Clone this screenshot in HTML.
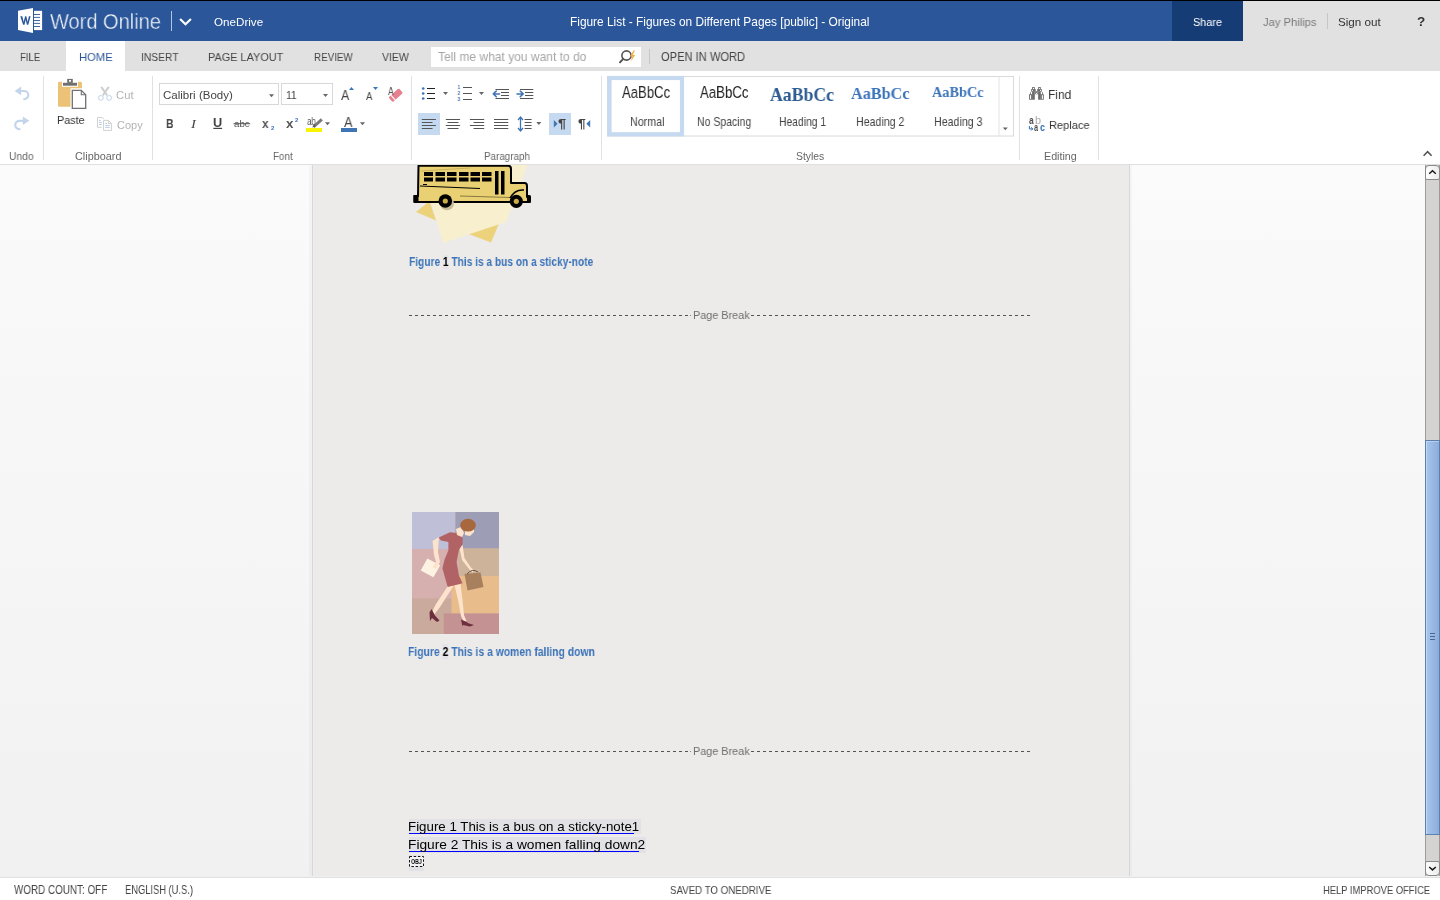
<!DOCTYPE html>
<html><head><meta charset="utf-8">
<style>
*{margin:0;padding:0;box-sizing:border-box}
html,body{width:1440px;height:900px;overflow:hidden;background:#fff;font-family:"Liberation Sans",sans-serif}
.a{position:absolute}
.t{position:absolute;white-space:nowrap;will-change:transform}
.sep{position:absolute;top:76px;width:1px;height:84px;background:#e1e1e1}
svg{position:absolute;overflow:visible}
</style></head><body>
<!-- header -->
<div class="a" style="left:0;top:0;width:1440px;height:1px;background:#000"></div>
<div class="a" style="left:0;top:1px;width:1440px;height:40px;background:#2b579a"></div>
<div class="a" style="left:1172px;top:1px;width:71px;height:40px;background:#163c75"></div>
<div class="a" style="left:1243px;top:1px;width:197px;height:40px;background:#e1e1e1"></div>
<svg style="left:0;top:0" width="60" height="41" viewBox="0 0 60 41">
<path d="M18 10.8 L33 7.9 L33 33 L18 30.1 Z" fill="#fff"/>
<path d="M34 10.8 H42.1 V30.1 H34 Z" fill="#fff"/>
<path d="M34 14.5H40M34 17.4H40M34 20.5H40M34 23.4H40M34 26.5H40" stroke="#2b579a" stroke-width="0.9"/>
<path d="M20.3 16.2 L22.3 16.2 L23.7 22 L25.1 16.2 L26.3 16.2 L27.7 22 L28.9 16.2 L30.6 16.2 L28.3 24.8 L26.9 24.8 L25.7 19.8 L24.5 24.8 L23.1 24.8 Z" fill="#2b579a"/>
</svg>
<div class="a" style="left:171px;top:11px;width:1px;height:20px;background:#b4c5e0"></div>
<svg style="left:0;top:0" width="200" height="41"><path d="M180.1 18.9 L185.5 24.2 L190.9 18.9" stroke="#fff" stroke-width="2.1" fill="none"/></svg>
<div class="a" style="left:1327px;top:13px;width:1px;height:16px;background:#c6c6c6"></div>
<!-- tabs -->
<div class="a" style="left:0;top:41px;width:1440px;height:30px;background:#e1e1e1"></div>
<div class="a" style="left:66px;top:41px;width:59px;height:30px;background:#fff"></div>
<div class="a" style="left:431px;top:47px;width:210px;height:20px;background:#fff"></div>
<svg style="left:618px;top:49px" width="20" height="16" viewBox="0 0 20 16">
<circle cx="8.5" cy="6.5" r="4.6" stroke="#555" stroke-width="1.6" fill="none"/>
<path d="M5.2 9.8 L2 13.3" stroke="#555" stroke-width="2" stroke-linecap="round"/>
<path d="M15.5 1.5 L12 7.5 L14.5 7.5 L12.5 13 L17.2 6 L14.7 6 L17 1.5 Z" fill="#f0b040"/>
</svg>
<div class="a" style="left:649px;top:49px;width:1px;height:15px;background:#c6c6c6"></div>
<!-- ribbon -->
<div class="a" style="left:0;top:164px;width:1440px;height:1px;background:#e0e0e0"></div>
<div class="sep" style="left:43px"></div>
<div class="sep" style="left:152px"></div>
<div class="sep" style="left:411px"></div>
<div class="sep" style="left:601px"></div>
<div class="sep" style="left:1019px"></div>
<div class="sep" style="left:1098px"></div>
<svg style="left:0;top:0" width="1440" height="165" viewBox="0 0 1440 165">
<!-- undo / redo -->
<g fill="#c3d5ea"><path d="M14.6 90.9 L21.2 86.6 L21.2 95.2 Z"/><path d="M29.4 120.8 L22.8 116.5 L22.8 125.1 Z"/></g>
<g stroke="#c3d5ea" stroke-width="2.1" fill="none">
<path d="M19.5 91 H24 C26.5 91 28.3 92.8 28.3 95 C28.3 97.3 26.3 99 23.3 99.3"/>
<path d="M24.5 120.9 H19.5 C17 120.9 15.2 122.7 15.2 124.9 C15.2 127.2 17.2 129 20.4 129.3"/>
</g>
<!-- clipboard -->
<rect x="58" y="81.7" width="24" height="25" rx="1.5" fill="#ebc276"/>
<rect x="62" y="77.5" width="16" height="9.3" fill="#fff"/>
<rect x="63" y="82.8" width="14" height="2.9" fill="#6f6f6f"/>
<rect x="67.2" y="78.9" width="5.6" height="4" fill="#6f6f6f"/>
<rect x="69" y="80" width="2" height="1.7" fill="#fff"/>
<rect x="70.5" y="88.3" width="17" height="22" fill="#fff"/>
<path d="M72.3 90.3 H81.3 L85.7 94.7 V108.4 H72.3 Z" fill="#fff" stroke="#707070" stroke-width="1.3"/>
<path d="M81.3 90.3 V94.7 H85.7" fill="none" stroke="#707070" stroke-width="1.1"/>
<!-- scissors -->
<g fill="#cdcdcd"><path d="M100.3 87.2 L102.2 86.6 L107.9 94.8 L106.4 96 Z"/><path d="M109.7 87.2 L107.8 86.6 L102.1 94.8 L103.6 96 Z"/></g>
<g stroke="#bfd2ea" stroke-width="1" fill="none"><circle cx="100.9" cy="97.9" r="2.4"/><circle cx="109.1" cy="97.9" r="2.4"/></g>
<!-- copy -->
<path d="M101.8 127.3 H97.55 V117.55 H102.4 L104.2 119.3" fill="none" stroke="#d0d0d0" stroke-width="1"/>
<path d="M103.55 120.4 H108.4 L111.55 123.55 V130.4 H103.55 Z" fill="#fff" stroke="#d0d0d0" stroke-width="1"/>
<path d="M108.4 120.4 V123.55 H111.55" fill="none" stroke="#d0d0d0" stroke-width="1"/>
<g stroke="#b8cce4" stroke-width="1"><path d="M99 120.4H100.8M99 122.4H101.8M99 124.4H101.8M105.3 123.4H107M105.3 125.4H109.8M105.3 127.4H109.8"/></g>
<!-- font boxes -->
<rect x="159.5" y="83.5" width="119" height="21" fill="#fff" stroke="#d8d8d8" stroke-width="1"/>
<rect x="281.5" y="83.5" width="51" height="21" fill="#fff" stroke="#d8d8d8" stroke-width="1"/>
<g fill="#666"><path d="M269 94.2 L274 94.2 L271.5 97.2 Z"/><path d="M323 94 L328 94 L325.5 97 Z"/>
<path d="M325 122.2 L330 122.2 L327.5 125.2 Z"/><path d="M360 122.2 L365 122.2 L362.5 125.2 Z"/>
<path d="M443 92 L448 92 L445.5 95 Z"/><path d="M479 92 L484 92 L481.5 95 Z"/><path d="M536.3 122 L541.4 122 L538.8 125 Z"/></g>
<g fill="#3a76bd"><path d="M349 90 L354 90 L351.5 87 Z"/><path d="M373 87 L378 87 L375.5 90 Z"/></g>
<!-- eraser -->
<g transform="rotate(-42 395.7 95.2)"><rect x="388.8" y="92" width="13.8" height="6.4" rx="1.2" fill="#e7808e"/><rect x="391.6" y="91.5" width="1.1" height="7.4" fill="#fff"/></g>
<!-- U underline, strike -->
<rect x="213.3" y="127.8" width="8.8" height="1.2" fill="#444"/>
<rect x="233.5" y="123.2" width="16.7" height="1" fill="#555"/>
<!-- highlighter / font color bars -->
<rect x="306" y="128" width="16" height="4" fill="#f9f500"/>
<rect x="341" y="128" width="16" height="4" fill="#3f74b5"/>
<path d="M321.8 119.4 L313.5 127" stroke="#7a7a7a" stroke-width="3" stroke-linecap="butt"/>
<path d="M312 127.6 L314.5 124.8 L315.5 126.5 Z" fill="#555"/>
<!-- paragraph row 1 -->
<g fill="#3f74b5"><circle cx="423.2" cy="88.5" r="1.35"/><circle cx="423.2" cy="93.5" r="1.35"/><circle cx="423.2" cy="98.5" r="1.35"/></g>
<path d="M427 88.5H435M427 93.5H435M427 98.5H435" stroke="#222" stroke-width="1.2"/>
<path d="M463 87.5H472M463 93.5H472M463 99.5H472" stroke="#555" stroke-width="1"/>
<g fill="#3f74b5" font-family="Liberation Sans" font-size="4.6" font-weight="bold"><text x="457.6" y="89.3">1</text><text x="457.6" y="95.1">2</text><text x="457.6" y="100.9">3</text></g>
<path d="M495.5 89.5H509M501 92.5H509M501 95.5H509M495.5 98.5H509" stroke="#555" stroke-width="1"/>
<path d="M520 89.5H533.3M525 92.5H533.3M525 95.5H533.3M520 98.5H533.3" stroke="#555" stroke-width="1"/>
<g stroke="#3f74b5" stroke-width="1.5" fill="none" stroke-linecap="round" stroke-linejoin="round"><path d="M499.5 93.9H493.5M496.3 91 L493.3 93.9 L496.3 96.8"/><path d="M517 93.9H523M520.2 91 L523.2 93.9 L520.2 96.8"/></g>
<!-- paragraph row 2 -->
<rect x="418" y="113" width="22" height="22" fill="#c5d9f1"/>
<rect x="549" y="113" width="22" height="22" fill="#c5d9f1"/>
<g stroke="#555" stroke-width="1">
<path d="M421.8 119.5H435.9M421.8 122.5H432.5M421.8 125.5H435.9M421.8 128.5H432.5"/>
<path d="M445.8 119.5H460.1M447.5 122.5H458.5M445.8 125.5H460.1M447.5 128.5H458.5"/>
<path d="M469.9 119.5H484.2M473.5 122.5H484.2M469.9 125.5H484.2M473.5 128.5H484.2"/>
<path d="M494 119.5H508.3M494 122.5H508.3M494 125.5H508.3M494 128.5H508.3"/>
<path d="M524.6 119.5H531.6M524.6 122.5H531.6M524.6 125.5H531.6M524.6 128.5H531.6"/>
</g>
<g stroke="#3f74b5" stroke-width="1.3" fill="none"><path d="M520.5 117.5V130.5M518 120 L520.5 117 L523 120M518 128 L520.5 131 L523 128"/></g>
<path d="M553.8 120 L557.6 123.8 L553.8 127.6 Z" fill="#3f74b5"/>
<path d="M590.2 120 L586.4 123.8 L590.2 127.6 Z" fill="#3f74b5"/>
<!-- styles gallery -->
<rect x="607.5" y="76.5" width="406" height="59.5" fill="#fff" stroke="#dadada" stroke-width="1"/>
<rect x="998.5" y="76.5" width="1" height="59.5" fill="#e3e3e3"/>
<rect x="609.5" y="78" width="72.5" height="56.3" fill="none" stroke="#c5d9f1" stroke-width="4.2"/>
<path d="M1002.8 127.5 L1007.8 127.5 L1005.3 130.3 Z" fill="#666"/>
<!-- find / replace -->
<g fill="#6a6a6a">
<rect x="1032.1" y="87.1" width="2.7" height="2.2"/><rect x="1031.1" y="89.1" width="4.6" height="2.6"/><rect x="1032.1" y="91.5" width="2.7" height="8.2"/>
<rect x="1029.1" y="94.2" width="3.2" height="5.5"/><rect x="1030" y="92.3" width="0.9" height="2"/>
<rect x="1035.2" y="91.3" width="2.5" height="3"/>
<rect x="1038.1" y="87.1" width="2.7" height="2.2"/><rect x="1037.2" y="89.1" width="4.6" height="2.6"/><rect x="1038.1" y="91.5" width="2.7" height="8.2"/>
<rect x="1040.6" y="94.2" width="3.2" height="5.5"/><rect x="1042" y="92.3" width="0.9" height="2"/>
</g>
<g fill="#fff">
<rect x="1033" y="88" width="1" height="1"/><rect x="1031.9" y="89.9" width="1" height="1"/><rect x="1036" y="92.9" width="1" height="1"/>
<rect x="1038.9" y="88" width="1" height="1"/><rect x="1040" y="89.9" width="1" height="1"/>
<rect x="1030" y="95.2" width="1.1" height="3.7"/><rect x="1041.8" y="95.2" width="1.1" height="3.7"/>
</g>
<path d="M1029.4 125.9 V128.9 H1032.6 M1031.2 127.3 L1032.8 128.9 L1031.2 130.5" stroke="#2e6db4" stroke-width="1" fill="none"/>
<!-- collapse chevron -->
<path d="M1423.6 155.8 L1427.6 151.6 L1431.6 155.8" stroke="#555" stroke-width="1.6" fill="none"/>
</svg>
<!-- document area -->
<div class="a" style="left:0;top:165px;width:1425px;height:711px;background:linear-gradient(#fbfbfb 0px,#fafafa 40px,#f1f1f1 711px)"></div>
<div class="a" style="left:309px;top:165px;width:3px;height:711px;background:rgba(0,0,0,0.022)"></div>
<div class="a" style="left:1130px;top:165px;width:2px;height:711px;background:rgba(0,0,0,0.022)"></div>
<div class="a" style="left:312px;top:165px;width:818px;height:711px;background:#edebe9;border-left:1px solid #d6d7dc;border-right:1px solid #d6d7dc"></div>
<div class="a" style="left:313px;top:165px;width:1px;height:711px;background:#efeeec"></div>
<div class="a" style="left:0;top:876px;width:1440px;height:1px;background:#f0f0f0"></div>
<div class="a" style="left:0;top:877px;width:1440px;height:1px;background:#e0e0e0"></div>
<!-- bus on sticky note -->
<svg style="left:0;top:0" width="1440" height="900" viewBox="0 0 1440 900">
<defs><clipPath id="dc"><rect x="0" y="165" width="1424" height="711"/></clipPath></defs>
<g clip-path="url(#dc)">
<path d="M416 212 L429.5 201 L436 220.5 Z" fill="#ecd27a"/>
<path d="M466 233 L499 223.5 L491 242.5 Z" fill="#ecd27a"/>
<path d="M431 201 L470 160 L528 163 L506 222 L443 243 Z" fill="#f8efcf"/>
<!-- bus body -->
<path d="M418.5 165.8 H508 Q511 165.8 511 169 V183 H524.5 Q527 183 527 186 V197 L529.5 198 V202 H414.5 V196 H418 Z" fill="#e9d173" stroke="#000" stroke-width="2" stroke-linejoin="round"/>
<path d="M420 186 L480 188.5" stroke="#000" stroke-width="1" fill="none"/>
<path d="M460 196 L510 197.5" stroke="#8a7a40" stroke-width="1.2" fill="none"/>
<path d="M421 171 L470 168" stroke="#c8b060" stroke-width="1" fill="none"/>
<g fill="#000">
<rect x="424" y="172" width="9" height="4"/><rect x="435.5" y="172" width="9.5" height="4"/><rect x="447" y="172" width="9.5" height="4"/><rect x="459" y="172" width="9.5" height="4"/><rect x="470.5" y="172" width="9.5" height="4"/><rect x="482" y="172" width="9.5" height="4"/>
<rect x="424" y="177.5" width="9" height="4"/><rect x="435.5" y="177.5" width="9.5" height="4"/><rect x="447" y="177.5" width="9.5" height="4"/><rect x="459" y="177.5" width="9.5" height="4"/><rect x="470.5" y="177.5" width="9.5" height="4"/><rect x="482" y="177.5" width="9.5" height="4"/>
<rect x="495" y="171" width="3.5" height="23.5"/><rect x="501" y="171" width="3.5" height="23.5"/>
<rect x="423" y="184" width="4" height="1"/>
</g>
<path d="M510 198 Q515 189 524 190" stroke="#000" stroke-width="1.5" fill="none"/>
<ellipse cx="447" cy="203.5" rx="7" ry="6.8" fill="#c8bc98"/>
<circle cx="445.3" cy="201" r="6.8" fill="#000"/><circle cx="445.3" cy="201" r="2.6" fill="#c9ac4c"/>
<circle cx="516.3" cy="201.3" r="6.6" fill="#000"/><circle cx="516.3" cy="201.3" r="2.6" fill="#c9ac4c"/>
<rect x="527" y="195" width="4" height="8" rx="1.5" fill="#000"/>
<rect x="413.5" y="195" width="5" height="7.5" fill="#000"/>
</g>
<!-- woman image -->
<g transform="translate(412 512)">
<rect x="0" y="0" width="87" height="122" fill="#c9aa9c"/>
<rect x="0" y="0" width="43.5" height="37" fill="#bfc0d7"/>
<rect x="43.5" y="0" width="43.5" height="36.5" fill="#9d9eb6"/>
<rect x="0" y="37" width="47" height="49.5" fill="#d6afaf"/>
<rect x="47" y="36.5" width="40" height="27.5" fill="#cdb39a"/>
<rect x="39.5" y="64" width="47.5" height="37.5" fill="#e9bd8b"/>
<rect x="31.8" y="101.5" width="55.2" height="20.5" fill="#c49293"/>
<!-- legs -->
<path d="M36.5 73 L24 92 L19.8 100.5 L22.3 102.5 L28 95 L41.5 74 Z" fill="#fde2cc"/>
<path d="M42.5 73 L46.5 90 L49 104 L51.5 109.5 L54.5 109 L52 103 L50.5 88 L48.5 72 Z" fill="#fde2cc"/>
<!-- shoes -->
<path d="M17.5 100.5 L19.5 97 L23 103.5 L27.5 108.5 L25 110 L20 106 L18 109 Z" fill="#6d2e3e"/>
<path d="M49 107.5 L52.5 109 L57 111.5 L62 113 L58 114.5 L51 113 L50.5 114.5 Z" fill="#6d2e3e"/>
<!-- paper -->
<path d="M15.4 46.5 L28.2 53.2 L21.4 65.2 L8.7 58.5 Z" fill="#fef3e3"/>
<!-- arms -->
<path d="M27 25 L20.5 29 L22 43 L24 50 L20.5 55 L24 57 L28 50 L26 40 L26.5 31 Z" fill="#fde2cc"/>
<path d="M47.5 36 L50 48 L57.5 57.5 L60.5 60.5 L62 58.5 L58.5 55 L52.5 46 L50.6 33 Z" fill="#fde2cc"/>
<!-- dress -->
<path d="M26.7 25.5 L37.9 20.2 L44.6 21 L50.6 25.5 L50.6 31.9 L46.9 38 L44.6 50 L47 63.7 L50.6 71.2 L35.7 74.9 L30.4 56.2 L32.7 47.2 L36.4 38.2 L36.4 29.9 L28.9 28.5 Z" fill="#b06265"/>
<!-- neck / face / hair -->
<path d="M44 17 L49 15 L52 21 L50 25 L45 23 Z" fill="#fde2cc"/>
<path d="M53 14 L62 14 L62 20 L58 24 L53 23 Z" fill="#fde2cc"/>
<ellipse cx="56" cy="13.2" rx="7.8" ry="6.4" fill="#a8683e"/>
<!-- bag -->
<path d="M52.5 62 L68.5 60.5 L71.5 75 L55.5 78.5 Z" fill="#a8805d"/>
<path d="M55 62 Q60 56 66 60" stroke="#6a5040" stroke-width="1" fill="none"/>
</g>
</svg>
<!-- page break dashes -->
<div class="a" style="left:409px;top:315px;width:282px;height:1px;background:repeating-linear-gradient(90deg,#555 0 3px,transparent 3px 6px)"></div>
<div class="a" style="left:751px;top:315px;width:279px;height:1px;background:repeating-linear-gradient(90deg,#555 0 3px,transparent 3px 6px)"></div>
<div class="a" style="left:409px;top:751px;width:282px;height:1px;background:repeating-linear-gradient(90deg,#555 0 3px,transparent 3px 6px)"></div>
<div class="a" style="left:751px;top:751px;width:279px;height:1px;background:repeating-linear-gradient(90deg,#555 0 3px,transparent 3px 6px)"></div>
<div class="a" style="left:690px;top:315px;width:1px;height:1px;background:#888"></div>
<div class="a" style="left:690px;top:751px;width:1px;height:1px;background:#888"></div>
<!-- figure list highlights -->
<div class="a" style="left:409px;top:819px;width:232px;height:15px;background:#e1e1e6"></div>
<div class="a" style="left:409px;top:837px;width:237px;height:16px;background:#e1e1e6"></div>
<div class="a" style="left:409px;top:855px;width:15px;height:16px;background:#e1e1e6"></div>
<div class="a" style="left:409px;top:833px;width:225px;height:1px;background:#0000ff"></div>
<div class="a" style="left:409px;top:851px;width:230px;height:1px;background:#0000ff"></div>
<div class="a" style="left:409px;top:856px;width:15px;height:11px;background:#f3f3f6"></div>
<svg style="left:0;top:0" width="1440" height="900"><rect x="409.5" y="856.5" width="14" height="10" fill="none" stroke="#111" stroke-width="1" stroke-dasharray="2.5 1.7"/></svg>
<!-- scrollbar -->
<div class="a" style="left:1425px;top:165px;width:15px;height:711px;background:#d5d3d1;border-left:1px solid #9e9c9a;border-right:1px solid #9a9a9a"></div>
<div class="a" style="left:1425px;top:165px;width:15px;height:15px;background:linear-gradient(90deg,#fdfdfd,#ececec);border:1px solid #8a8a8a;border-radius:4px 4px 2px 2px"></div>
<svg style="left:1425px;top:165px" width="15" height="15" viewBox="0 0 15 15"><path d="M4.2 8.7 L7.5 5.8 L10.8 8.7" stroke="#1a1a1a" stroke-width="1.5" fill="none"/></svg>
<div class="a" style="left:1425px;top:440px;width:15px;height:395px;background:linear-gradient(90deg,#a9c6ec,#8aaddc);border:1px solid #5b7fae;box-shadow:inset 1px 1px 0 rgba(255,255,255,0.35)"></div>
<div class="a" style="left:1430px;top:633px;width:5px;height:1px;background:#4a6894"></div>
<div class="a" style="left:1430px;top:636px;width:5px;height:1px;background:#4a6894"></div>
<div class="a" style="left:1430px;top:639px;width:5px;height:1px;background:#4a6894"></div>
<div class="a" style="left:1425px;top:861px;width:15px;height:15px;background:linear-gradient(90deg,#fdfdfd,#ececec);border:1px solid #8a8a8a;border-radius:2px 2px 4px 4px"></div>
<svg style="left:1425px;top:861px" width="15" height="15" viewBox="0 0 15 15"><path d="M4.2 6 L7.5 8.9 L10.8 6" stroke="#1a1a1a" stroke-width="1.5" fill="none"/></svg>

<div class="t" style="left:49.60px;top:10.75px;font-size:21.74px;line-height:21.74px;font-family:'Liberation Sans',sans-serif;font-weight:normal;color:#fff;transform:scaleX(0.9215);transform-origin:0 0;-webkit-text-stroke:0.45px #2b579a">Word Online</div>
<div class="t" style="left:214.20px;top:17.00px;font-size:11.43px;line-height:11.43px;font-family:'Liberation Sans',sans-serif;font-weight:normal;color:#fff;transform:scaleX(1.0181);transform-origin:0 0;">OneDrive</div>
<div class="t" style="left:570.40px;top:17.20px;font-size:11.88px;line-height:11.88px;font-family:'Liberation Sans',sans-serif;font-weight:normal;color:#fff;">Figure List - Figures on Different Pages [public] - Original</div>
<div class="t" style="left:1193.30px;top:16.00px;font-size:11.69px;line-height:11.69px;font-family:'Liberation Sans',sans-serif;font-weight:normal;color:#fff;transform:scaleX(0.9287);transform-origin:0 0;">Share</div>
<div class="t" style="left:1263.10px;top:17.00px;font-size:11.59px;line-height:11.59px;font-family:'Liberation Sans',sans-serif;font-weight:normal;color:#7a7a7a;transform:scaleX(0.9667);transform-origin:0 0;">Jay Philips</div>
<div class="t" style="left:1338.30px;top:16.90px;font-size:11.27px;line-height:11.27px;font-family:'Liberation Sans',sans-serif;font-weight:normal;color:#333;transform:scaleX(1.0343);transform-origin:0 0;">Sign out</div>
<div class="t" style="left:1417.30px;top:14.90px;font-size:13.52px;line-height:13.52px;font-family:'Liberation Sans',sans-serif;font-weight:bold;color:#333;transform:scaleX(0.9750);transform-origin:0 0;">?</div>
<div class="t" style="left:20.40px;top:52.00px;font-size:11.59px;line-height:11.59px;font-family:'Liberation Sans',sans-serif;font-weight:normal;color:#444;transform:scaleX(0.8250);transform-origin:0 0;">FILE</div>
<div class="t" style="left:78.75px;top:52.00px;font-size:11.59px;line-height:11.59px;font-family:'Liberation Sans',sans-serif;font-weight:normal;color:#2b579a;transform:scaleX(0.9725);transform-origin:0 0;">HOME</div>
<div class="t" style="left:141.31px;top:52.00px;font-size:11.59px;line-height:11.59px;font-family:'Liberation Sans',sans-serif;font-weight:normal;color:#444;transform:scaleX(0.8877);transform-origin:0 0;">INSERT</div>
<div class="t" style="left:208.40px;top:51.80px;font-size:11.45px;line-height:11.45px;font-family:'Liberation Sans',sans-serif;font-weight:normal;color:#444;transform:scaleX(0.9527);transform-origin:0 0;">PAGE LAYOUT</div>
<div class="t" style="left:313.80px;top:51.80px;font-size:11.29px;line-height:11.29px;font-family:'Liberation Sans',sans-serif;font-weight:normal;color:#444;transform:scaleX(0.8704);transform-origin:0 0;">REVIEW</div>
<div class="t" style="left:382.10px;top:51.80px;font-size:11.45px;line-height:11.45px;font-family:'Liberation Sans',sans-serif;font-weight:normal;color:#444;transform:scaleX(0.9139);transform-origin:0 0;">VIEW</div>
<div class="t" style="left:437.70px;top:51.40px;font-size:12.75px;line-height:12.75px;font-family:'Liberation Sans',sans-serif;font-weight:normal;color:#a6a6a6;transform:scaleX(0.9431);transform-origin:0 0;">Tell me what you want to do</div>
<div class="t" style="left:661.30px;top:51.40px;font-size:12.57px;line-height:12.57px;font-family:'Liberation Sans',sans-serif;font-weight:normal;color:#444;transform:scaleX(0.8867);transform-origin:0 0;">OPEN IN WORD</div>
<div class="t" style="left:56.60px;top:114.90px;font-size:11.30px;line-height:11.30px;font-family:'Liberation Sans',sans-serif;font-weight:normal;color:#333;transform:scaleX(0.9579);transform-origin:0 0;">Paste</div>
<div class="t" style="left:116.30px;top:90.75px;font-size:10.36px;line-height:10.36px;font-family:'Liberation Sans',sans-serif;font-weight:normal;color:#b3b3b3;transform:scaleX(1.0911);transform-origin:0 0;">Cut</div>
<div class="t" style="left:116.50px;top:119.60px;font-size:10.86px;line-height:10.86px;font-family:'Liberation Sans',sans-serif;font-weight:normal;color:#b3b3b3;transform:scaleX(1.0119);transform-origin:0 0;">Copy</div>
<div class="t" style="left:9.40px;top:150.80px;font-size:11.01px;line-height:11.01px;font-family:'Liberation Sans',sans-serif;font-weight:normal;color:#666;transform:scaleX(0.9359);transform-origin:0 0;">Undo</div>
<div class="t" style="left:75.00px;top:150.80px;font-size:10.86px;line-height:10.86px;font-family:'Liberation Sans',sans-serif;font-weight:normal;color:#666;transform:scaleX(0.9939);transform-origin:0 0;">Clipboard</div>
<div class="t" style="left:163.30px;top:89.80px;font-size:11.29px;line-height:11.29px;font-family:'Liberation Sans',sans-serif;font-weight:normal;color:#444;transform:scaleX(1.0221);transform-origin:0 0;">Calibri (Body)</div>
<div class="t" style="left:285.80px;top:90.10px;font-size:11.59px;line-height:11.59px;font-family:'Liberation Sans',sans-serif;font-weight:normal;color:#444;transform:scaleX(0.8895);transform-origin:0 0;">11</div>
<div class="t" style="left:272.90px;top:151.70px;font-size:10.43px;line-height:10.43px;font-family:'Liberation Sans',sans-serif;font-weight:normal;color:#666;transform:scaleX(0.9400);transform-origin:0 0;">Font</div>
<div class="t" style="left:483.75px;top:150.70px;font-size:10.58px;line-height:10.58px;font-family:'Liberation Sans',sans-serif;font-weight:normal;color:#666;transform:scaleX(0.9292);transform-origin:0 0;">Paragraph</div>
<div class="t" style="left:622.40px;top:84.00px;font-size:16.23px;line-height:16.23px;font-family:'Liberation Sans',sans-serif;font-weight:normal;color:#222;transform:scaleX(0.8066);transform-origin:0 0;">AaBbCc</div>
<div class="t" style="left:629.60px;top:115.90px;font-size:12.03px;line-height:12.03px;font-family:'Liberation Sans',sans-serif;font-weight:normal;color:#444;transform:scaleX(0.8935);transform-origin:0 0;">Normal</div>
<div class="t" style="left:700.30px;top:84.00px;font-size:16.23px;line-height:16.23px;font-family:'Liberation Sans',sans-serif;font-weight:normal;color:#222;transform:scaleX(0.8133);transform-origin:0 0;">AaBbCc</div>
<div class="t" style="left:697.40px;top:115.90px;font-size:12.03px;line-height:12.03px;font-family:'Liberation Sans',sans-serif;font-weight:normal;color:#444;transform:scaleX(0.8724);transform-origin:0 0;">No Spacing</div>
<div class="t" style="left:770.00px;top:84.70px;font-size:19.85px;line-height:19.85px;font-family:'Liberation Serif',serif;font-weight:bold;color:#2d5b92;transform:scaleX(0.8941);transform-origin:0 0;">AaBbCc</div>
<div class="t" style="left:778.60px;top:115.90px;font-size:12.03px;line-height:12.03px;font-family:'Liberation Sans',sans-serif;font-weight:normal;color:#444;transform:scaleX(0.8603);transform-origin:0 0;">Heading 1</div>
<div class="t" style="left:851.20px;top:86.20px;font-size:16.82px;line-height:16.82px;font-family:'Liberation Serif',serif;font-weight:bold;color:#3b73b9;transform:scaleX(0.9640);transform-origin:0 0;">AaBbCc</div>
<div class="t" style="left:855.74px;top:116.40px;font-size:12.32px;line-height:12.32px;font-family:'Liberation Sans',sans-serif;font-weight:normal;color:#444;transform:scaleX(0.8620);transform-origin:0 0;">Heading 2</div>
<div class="t" style="left:932.40px;top:84.20px;font-size:15.30px;line-height:15.30px;font-family:'Liberation Serif',serif;font-weight:bold;color:#3b73b9;transform:scaleX(0.9323);transform-origin:0 0;">AaBbCc</div>
<div class="t" style="left:933.54px;top:116.40px;font-size:12.32px;line-height:12.32px;font-family:'Liberation Sans',sans-serif;font-weight:normal;color:#444;transform:scaleX(0.8638);transform-origin:0 0;">Heading 3</div>
<div class="t" style="left:796.20px;top:151.50px;font-size:10.14px;line-height:10.14px;font-family:'Liberation Sans',sans-serif;font-weight:normal;color:#666;transform:scaleX(1.0251);transform-origin:0 0;">Styles</div>
<div class="t" style="left:1047.69px;top:88.20px;font-size:13.19px;line-height:13.19px;font-family:'Liberation Sans',sans-serif;font-weight:normal;color:#333;transform:scaleX(0.9095);transform-origin:0 0;">Find</div>
<div class="t" style="left:1048.60px;top:119.80px;font-size:11.57px;line-height:11.57px;font-family:'Liberation Sans',sans-serif;font-weight:normal;color:#333;transform:scaleX(0.9573);transform-origin:0 0;">Replace</div>
<div class="t" style="left:1043.50px;top:151.00px;font-size:10.72px;line-height:10.72px;font-family:'Liberation Sans',sans-serif;font-weight:normal;color:#666;transform:scaleX(0.9935);transform-origin:0 0;">Editing</div>
<div class="t" style="left:14.10px;top:884.00px;font-size:12.03px;line-height:12.03px;font-family:'Liberation Sans',sans-serif;font-weight:normal;color:#444;transform:scaleX(0.8212);transform-origin:0 0;">WORD COUNT: OFF</div>
<div class="t" style="left:125.30px;top:884.00px;font-size:12.03px;line-height:12.03px;font-family:'Liberation Sans',sans-serif;font-weight:normal;color:#444;transform:scaleX(0.7775);transform-origin:0 0;">ENGLISH (U.S.)</div>
<div class="t" style="left:670.30px;top:885.00px;font-size:11.13px;line-height:11.13px;font-family:'Liberation Sans',sans-serif;font-weight:normal;color:#444;transform:scaleX(0.8727);transform-origin:0 0;">SAVED TO ONEDRIVE</div>
<div class="t" style="left:1322.50px;top:884.80px;font-size:11.30px;line-height:11.30px;font-family:'Liberation Sans',sans-serif;font-weight:normal;color:#444;transform:scaleX(0.8299);transform-origin:0 0;">HELP IMPROVE OFFICE</div>
<div class="t" style="left:692.70px;top:309.75px;font-size:11.52px;line-height:11.52px;font-family:'Liberation Sans',sans-serif;font-weight:normal;color:#6e6e6e;transform:scaleX(0.9418);transform-origin:0 0;">Page Break</div>
<div class="t" style="left:692.70px;top:745.75px;font-size:11.52px;line-height:11.52px;font-family:'Liberation Sans',sans-serif;font-weight:normal;color:#6e6e6e;transform:scaleX(0.9418);transform-origin:0 0;">Page Break</div>
<div class="t" style="left:408.60px;top:256.00px;font-size:12.17px;line-height:12.17px;font-family:'Liberation Sans',sans-serif;font-weight:bold;color:#3b73b9;transform:scaleX(0.8365);transform-origin:0 0;">Figure <span style="color:#000;background:#e3e3e8">1</span> This is a bus on a sticky-note</div>
<div class="t" style="left:408.40px;top:646.20px;font-size:12.90px;line-height:12.90px;font-family:'Liberation Sans',sans-serif;font-weight:bold;color:#3b73b9;transform:scaleX(0.8051);transform-origin:0 0;">Figure <span style="color:#000;background:#e3e3e8">2</span> This is a women falling down</div>
<div class="t" style="left:408.39px;top:819.80px;font-size:13.19px;line-height:13.19px;font-family:'Liberation Sans',sans-serif;font-weight:normal;color:#000;transform:scaleX(1.0091);transform-origin:0 0;">Figure 1 This is a bus on a sticky-note1</div>
<div class="t" style="left:408.36px;top:837.80px;font-size:13.19px;line-height:13.19px;font-family:'Liberation Sans',sans-serif;font-weight:normal;color:#000;transform:scaleX(1.0417);transform-origin:0 0;">Figure 2 This is a women falling down2</div>
<div class="t" style="left:165.70px;top:117.90px;font-size:12.46px;line-height:12.46px;font-family:'Liberation Sans',sans-serif;font-weight:bold;color:#444;transform:scaleX(0.8333);transform-origin:0 0;">B</div>
<div class="t" style="left:191.12px;top:116.90px;font-size:13.23px;line-height:13.23px;font-family:'Liberation Serif',serif;font-weight:normal;font-style:italic;color:#444;transform:scaleX(1.1167);transform-origin:0 0;">I</div>
<div class="t" style="left:213.30px;top:116.70px;font-size:12.75px;line-height:12.75px;font-family:'Liberation Sans',sans-serif;font-weight:bold;color:#444;transform:scaleX(0.9667);transform-origin:0 0;">U</div>
<div class="t" style="left:233.75px;top:120.00px;font-size:9.04px;line-height:9.04px;font-family:'Liberation Sans',sans-serif;font-weight:normal;color:#555;transform:scaleX(1.0801);transform-origin:0 0;">abc</div>
<div class="t" style="left:262.00px;top:116.90px;font-size:13.15px;line-height:13.15px;font-family:'Liberation Sans',sans-serif;font-weight:bold;color:#555;transform:scaleX(0.9000);transform-origin:0 0;">x</div>
<div class="t" style="left:270.80px;top:126.00px;font-size:5.36px;line-height:5.36px;font-family:'Liberation Sans',sans-serif;font-weight:bold;color:#3a76bd;transform:scaleX(1.1333);transform-origin:0 0;">2</div>
<div class="t" style="left:285.90px;top:117.70px;font-size:12.78px;line-height:12.78px;font-family:'Liberation Sans',sans-serif;font-weight:bold;color:#555;transform:scaleX(1.0429);transform-origin:0 0;">x</div>
<div class="t" style="left:294.90px;top:117.80px;font-size:5.43px;line-height:5.43px;font-family:'Liberation Sans',sans-serif;font-weight:bold;color:#3a76bd;transform:scaleX(1.1000);transform-origin:0 0;">2</div>
<div class="t" style="left:341.40px;top:88.60px;font-size:13.91px;line-height:13.91px;font-family:'Liberation Sans',sans-serif;font-weight:normal;color:#444;transform:scaleX(0.9000);transform-origin:0 0;">A</div>
<div class="t" style="left:366.40px;top:90.60px;font-size:11.01px;line-height:11.01px;font-family:'Liberation Sans',sans-serif;font-weight:normal;color:#444;transform:scaleX(0.8750);transform-origin:0 0;">A</div>
<div class="t" style="left:388.00px;top:85.90px;font-size:11.45px;line-height:11.45px;font-family:'Liberation Sans',sans-serif;font-weight:normal;color:#555;transform:scaleX(0.7500);transform-origin:0 0;">A</div>
<div class="t" style="left:344.20px;top:114.70px;font-size:14.06px;line-height:14.06px;font-family:'Liberation Sans',sans-serif;font-weight:normal;color:#444;transform:scaleX(0.9100);transform-origin:0 0;">A</div>
<div class="t" style="left:307.00px;top:116.00px;font-size:10.55px;line-height:10.55px;font-family:'Liberation Sans',sans-serif;font-weight:normal;color:#555;transform:scaleX(0.7590);transform-origin:0 0;">ab</div>
<div class="t" style="left:558.00px;top:118.30px;font-size:12.61px;line-height:12.61px;font-family:'Liberation Sans',sans-serif;font-weight:bold;color:#444;transform:scaleX(1.1571);transform-origin:0 0;">¶</div>
<div class="t" style="left:577.80px;top:118.30px;font-size:12.61px;line-height:12.61px;font-family:'Liberation Sans',sans-serif;font-weight:bold;color:#444;transform:scaleX(1.1000);transform-origin:0 0;">¶</div>
<div class="t" style="left:1028.90px;top:115.00px;font-size:11.30px;line-height:11.30px;font-family:'Liberation Sans',sans-serif;font-weight:bold;color:#444;transform:scaleX(0.7286);transform-origin:0 0;">a</div>
<div class="t" style="left:1035.00px;top:115.00px;font-size:10.96px;line-height:10.96px;font-family:'Liberation Sans',sans-serif;font-weight:normal;color:#aaa;transform:scaleX(0.9833);transform-origin:0 0;">b</div>
<div class="t" style="left:1034.10px;top:121.80px;font-size:10.74px;line-height:10.74px;font-family:'Liberation Sans',sans-serif;font-weight:bold;color:#444;transform:scaleX(0.6857);transform-origin:0 0;">a</div>
<div class="t" style="left:1040.00px;top:121.80px;font-size:10.74px;line-height:10.74px;font-family:'Liberation Sans',sans-serif;font-weight:bold;color:#2e6db4;transform:scaleX(0.8333);transform-origin:0 0;">c</div>
<div class="t" style="left:411.00px;top:858.80px;font-size:6.86px;line-height:6.86px;font-family:'Liberation Sans',sans-serif;font-weight:bold;color:#111;transform:scaleX(0.7641);transform-origin:0 0;">OBJ</div>
</body></html>
